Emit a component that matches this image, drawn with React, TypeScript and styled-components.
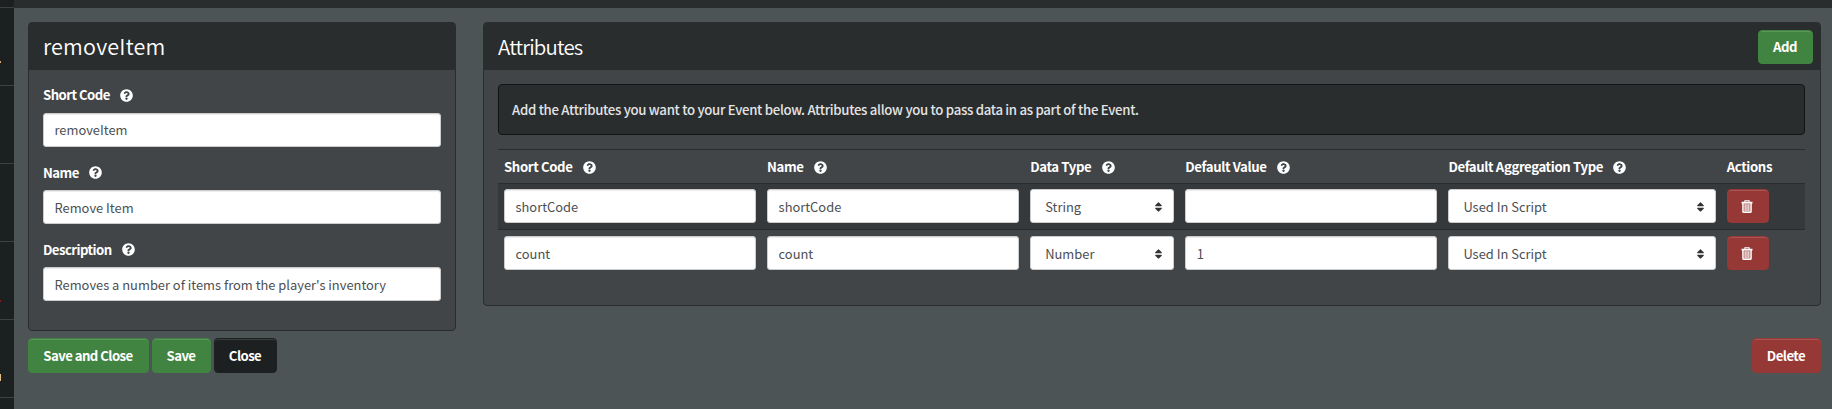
import React from "react";
import styled, { createGlobalStyle, css } from "styled-components";
import { FaQuestionCircle, FaSort } from "react-icons/fa";

const Global = createGlobalStyle`
  * { box-sizing: border-box; }
  html, body { margin: 0; padding: 0; background: #4d5456; }
  body, input, button {
    font-family: "Noto Sans CJK SC", "Noto Sans", sans-serif;
    font-size: 12.9px;
    line-height: 20px;
  }
`;

const Shell = styled.div`
  display: flex;
  width: 1832px;
  height: 409px;
  overflow: hidden;
  background: #4d5456;
`;

const Sidebar = styled.nav`
  flex: 0 0 14px;
  background: #1c2021;
  overflow: hidden;
`;

const SideItem = styled.div<{ $first?: boolean }>`
  display: flex;
  height: ${(p) => (p.$first ? 8 : 78)}px;
  border-bottom: 1px solid #3c4244;
`;

const SideMark = styled.span<{ $top: number; $height: number; $color: string }>`
  width: 1px;
  height: ${(p) => p.$height}px;
  margin-top: ${(p) => p.$top}px;
  background: ${(p) => p.$color};
`;

const Main = styled.main`
  flex: 1;
  display: flex;
  flex-direction: column;
`;

const TopBar = styled.header`
  flex: 0 0 8px;
  background: #292d2e;
`;

const Columns = styled.div`
  display: flex;
  align-items: flex-start;
  gap: 27px;
  padding: 14px 11px 0 14px;
`;

const Panel = styled.section<{ $width?: number; $height: number }>`
  ${(p) => (p.$width ? css`flex: 0 0 ${p.$width}px;` : css`flex: 1;`)}
  height: ${(p) => p.$height}px;
  background: #414547;
  border: 1px solid #292d2e;
  border-radius: 4px;
`;

const PanelHeader = styled.div`
  display: flex;
  align-items: center;
  justify-content: space-between;
  height: 47px;
  padding: 0 7px 0 14px;
  background: #292d2e;
`;

const Title = styled.h3<{ $wide?: boolean }>`
  margin: 0 0 ${(p) => (p.$wide ? 2 : 1)}px;
  color: #fff;
  font-size: ${(p) => (p.$wide ? 21.5 : 20.4)}px;
  font-weight: 350;
  letter-spacing: ${(p) => (p.$wide ? 0.2 : -0.8)}px;
  line-height: 28px;
`;

const Form = styled.div`
  padding: 14px;
`;

const AttributesBody = styled(Form)`
  padding-right: 15px;
`;

const Label = styled.div<{ $spacing?: number }>`
  display: flex;
  align-items: center;
  gap: 10.4px;
  height: 22px;
  color: #fff;
  font-size: 13.2px;
  font-weight: 700;
  letter-spacing: ${(p) => p.$spacing ?? -0.55}px;
  white-space: nowrap;
`;

const HelpIcon = styled(FaQuestionCircle)`
  width: 13px;
  height: 13px;
`;

const Input = styled.input`
  display: block;
  width: 100%;
  height: 34px;
  padding: 0 10.5px;
  border: 1px solid #ccc;
  border-radius: 3px;
  background: #fff;
  color: #4c4f52;
  outline: 0;
  box-shadow: inset 0 1px 1px rgba(0, 0, 0, 0.075);
`;

const FieldInput = styled(Input)`
  margin-top: 7px;
`;

const Field = styled.div`
  height: 77px;

  &:first-child ${FieldInput} {
    padding-bottom: 1px;
  }

  & + & ${Label} {
    padding-top: 1px;
  }
`;

const Alert = styled.div`
  height: 51px;
  padding: 15px 13px;
  margin-bottom: 14px;
  border: 1px solid #111415;
  border-radius: 4px;
  background: #292d2e;
  color: #e4e4e4;
  font-size: 13.2px;
  font-weight: 500;
  letter-spacing: -0.29px;
`;

const Row = styled.div<{ $kind?: "head" | "dark" }>`
  display: grid;
  grid-template-columns: 252px 252px 144px 252px 267.2px 1fr;
  column-gap: 11.1px;
  align-items: start;
  height: ${(p) => (p.$kind === "head" ? 34 : p.$kind ? 46 : 47)}px;
  padding: ${(p) => (p.$kind === "head" ? 6 : p.$kind ? 5 : 6)}px 0 0 6px;
  border-top: 1px solid #292d2e;
  background: ${(p) => (p.$kind === "dark" ? "#35393b" : "transparent")};
`;

const Select = styled.div`
  display: flex;
  align-items: center;
  justify-content: space-between;
  height: 34px;
  padding: 1px 10px 0 14px;
  border: 1px solid #ccc;
  border-radius: 3px;
  background: #fff;
  color: #4c4f52;
`;

const Arrows = styled(FaSort)`
  width: 9px;
  height: 12px;
  color: #333;
`;

const tones = { green: "#418341", black: "#1c2021", red: "#963836" };
const edges = { green: "#5b955b", black: "#3a3e3f", red: "#a95553" };

const Button = styled.button<{ $tone: keyof typeof tones; $width: number; $height?: number }>`
  display: flex;
  align-items: center;
  justify-content: center;
  width: ${(p) => p.$width}px;
  height: ${(p) => p.$height ?? 35}px;
  padding: 0 1px 0 0;
  border: 1px solid ${(p) => tones[p.$tone]};
  border-radius: 4px;
  background: ${(p) => tones[p.$tone]};
  box-shadow: inset 0 1px 0 ${(p) => edges[p.$tone]};
  color: #fff;
  font-size: 13.2px;
  font-weight: 700;
  letter-spacing: -0.55px;
`;

const Footer = styled.footer`
  display: flex;
  gap: 3px;
  padding: 7px 11px 0 14px;
`;

const Spacer = styled.div`
  flex: 1;
`;

const TrashIcon = () => (
  <svg width="12" height="13" viewBox="0 0 12 13" fill="none" stroke="#fff">
    <path d="M.5 2.6h11" strokeWidth="1.7" />
    <path d="M3.9 2.3V.8h4.2v1.5" strokeWidth="1.1" />
    <path d="M1.9 3v8.4q0 .9.9.9h6.4q.9 0 .9-.9V3" strokeWidth="1.4" fill="#fff" fillOpacity=".3" />
    <path d="M4.2 4.2v7M6 4.2v7M7.8 4.2v7" strokeWidth=".9" />
  </svg>
);

const fields = [
  ["Short Code", "removeItem"],
  ["Name", "Remove Item"],
  ["Description", "Removes a number of items from the player's inventory"],
];
const headings = ["Short Code", "Name", "Data Type", "Default Value", "Default Aggregation Type"];
const attributes = [
  { code: "shortCode", type: "String", value: "" },
  { code: "count", type: "Number", value: "1" },
];

export default function App() {
  return (
    <Shell>
      <Global />
      <Sidebar>
        <SideItem $first />
        <SideItem><SideMark $top={53} $height={2} $color="#d9a860" /></SideItem>
        <SideItem />
        <SideItem />
        <SideItem><SideMark $top={58} $height={2} $color="#8c1c18" /></SideItem>
        <SideItem><SideMark $top={54} $height={7} $color="#e5bd8b" /></SideItem>
      </Sidebar>
      <Main>
        <TopBar />
        <Columns>
          <Panel $width={428} $height={309}>
            <PanelHeader><Title $wide>removeItem</Title></PanelHeader>
            <Form>
              {fields.map(([label, value]) => (
                <Field key={label}>
                  <Label>{label}<HelpIcon /></Label>
                  <FieldInput defaultValue={value} />
                </Field>
              ))}
            </Form>
          </Panel>
          <Panel $height={284}>
            <PanelHeader>
              <Title>Attributes</Title>
              <Button $tone="green" $width={55} $height={34}>Add</Button>
            </PanelHeader>
            <AttributesBody>
              <Alert>Add the Attributes you want to your Event below. Attributes allow you to pass data in as part of the Event.</Alert>
              <Row $kind="head">
                {headings.map((h) => <Label key={h} $spacing={-0.38}>{h}<HelpIcon /></Label>)}
                <Label $spacing={-0.38}>Actions</Label>
              </Row>
              {attributes.map((a, i) => (
                <Row key={a.code} $kind={i === 0 ? "dark" : undefined}>
                  <Input defaultValue={a.code} />
                  <Input defaultValue={a.code} />
                  <Select>{a.type}<Arrows /></Select>
                  <Input defaultValue={a.value} />
                  <Select>Used In Script<Arrows /></Select>
                  <Button $tone="red" $width={42} $height={34}><TrashIcon /></Button>
                </Row>
              ))}
            </AttributesBody>
          </Panel>
        </Columns>
        <Footer>
          <Button $tone="green" $width={121}>Save and Close</Button>
          <Button $tone="green" $width={59}>Save</Button>
          <Button $tone="black" $width={63}>Close</Button>
          <Spacer />
          <Button $tone="red" $width={69}>Delete</Button>
        </Footer>
      </Main>
    </Shell>
  );
}
